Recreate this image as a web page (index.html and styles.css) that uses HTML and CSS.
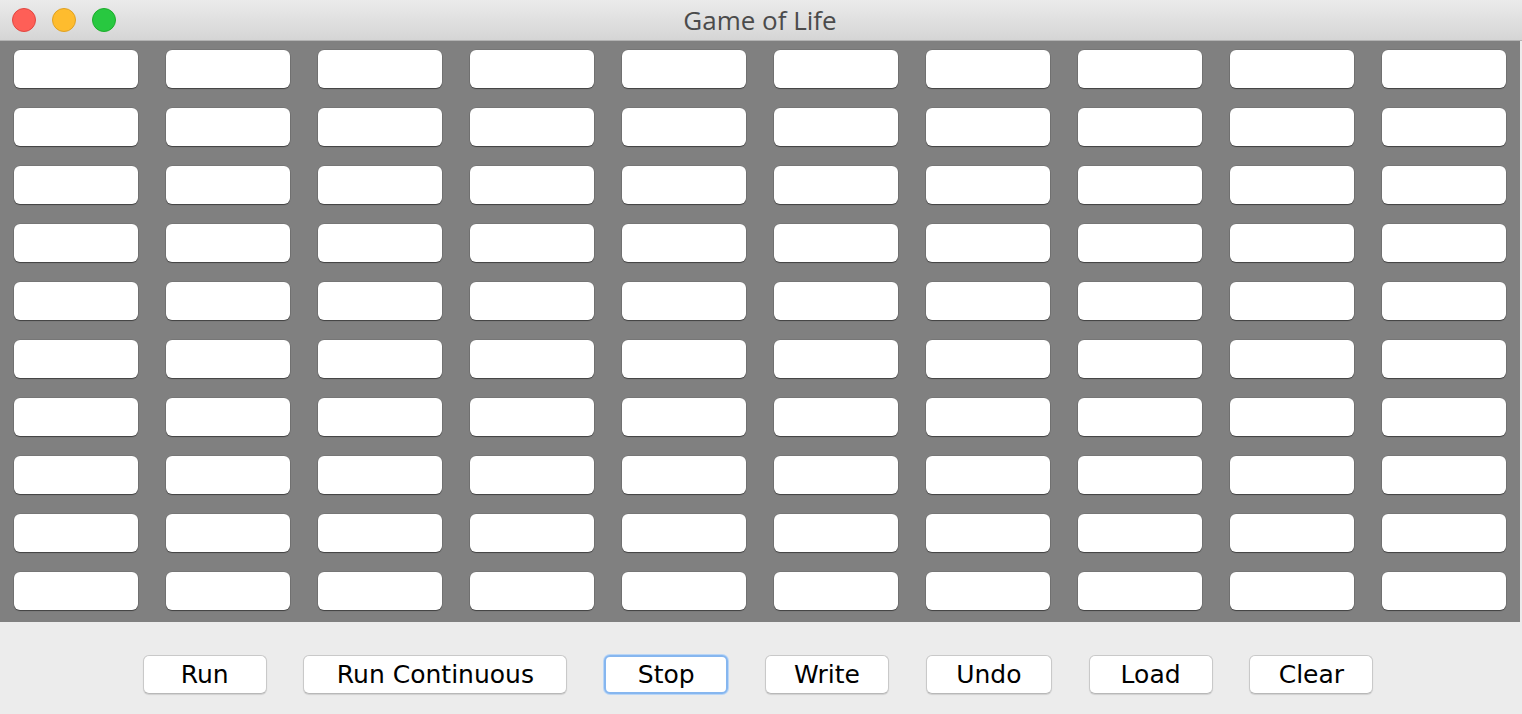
FILE: index.html
```html
<!DOCTYPE html>
<html>
<head>
<meta charset="utf-8">
<title>Game of Life</title>
<link rel="stylesheet" href="styles.css">
</head>
<body>
<div class="window">
  <div class="titlebar">
    <div class="lights">
      <span class="light red"></span>
      <span class="light yellow"></span>
      <span class="light green"></span>
    </div>
    <div class="title">Game of Life</div>
  </div>
  <div class="board" id="board"></div>
  <div class="controls">
    <button class="btn">Run</button>
    <button class="btn wide">Run Continuous</button>
    <button class="btn focus">Stop</button>
    <button class="btn">Write</button>
    <button class="btn undo">Undo</button>
    <button class="btn">Load</button>
    <button class="btn">Clear</button>
  </div>
</div>
<script src="app.js"></script>
</body>
</html>
```
FILE: styles.css
```css
* { box-sizing: border-box; }
html, body {
  margin: 0;
  padding: 0;
  width: 1522px;
  height: 714px;
  overflow: hidden;
  background: #ececec;
}
.window {
  width: 1522px;
  height: 714px;
  display: flex;
  flex-direction: column;
  background: #ececec;
}
.titlebar {
  height: 41px;
  flex: none;
  position: relative;
  background: linear-gradient(#ebebeb, #d5d5d5);
  border-bottom: 1px solid #b3b3b3;
  display: flex;
  align-items: center;
  justify-content: center;
}
.lights {
  position: absolute;
  left: 12px;
  top: 8px;
  display: flex;
  gap: 16px;
}
.light {
  width: 24px;
  height: 24px;
  border-radius: 50%;
  display: block;
}
.red { background: #fe5f57; border: 1px solid #e14640; }
.yellow { background: #febc2e; border: 1px solid #dfa123; }
.green { background: #28c840; border: 1px solid #1dad2b; }
.title {
  font-family: "Open Sans", "Liberation Sans", sans-serif;
  font-size: 26px;
  color: #4b4b4b;
  line-height: 40px;
  margin-top: -1px;
  margin-left: -2px;
}
.board {
  width: 1520px;
  height: 581px;
  flex: none;
  background: #808080;
  padding: 9px 14px 12px 14px;
  display: grid;
  grid-template-columns: repeat(10, 124px);
  grid-template-rows: repeat(10, 38px);
  column-gap: 28px;
  row-gap: 20px;
}
.cell {
  background: #fff;
  border-radius: 6px;
  box-shadow: 0 1px 1px rgba(0,0,0,0.45), 0 0 0 0.5px rgba(0,0,0,0.15);
}
.controls {
  flex: 1;
  display: flex;
  justify-content: center;
  align-items: flex-start;
  padding-top: 33px;
  padding-right: 6px;
  gap: 36.8px;
}
.btn {
  width: 124px;
  height: 39px;
  margin: 0;
  padding: 0;
  background: #fff;
  border: 1px solid #c9c9c9;
  border-bottom-color: #b8b8b8;
  border-radius: 6px;
  box-shadow: 0 1px 1px rgba(0,0,0,0.12);
  font-family: "DejaVu Sans", "Liberation Sans", sans-serif;
  font-size: 25px;
  color: #000;
  line-height: 37px;
}
.wide { width: 264px; }
.undo { width: 126px; }
.focus {
  border: 2px solid #86b6ef;
  box-shadow: 0 0 0 1px #b8d5f6;
  line-height: 35px;
}
```
FILE: app.js
```js
const board = document.getElementById('board');
for (let i = 0; i < 100; i++) {
  const c = document.createElement('div');
  c.className = 'cell';
  board.appendChild(c);
}
```
